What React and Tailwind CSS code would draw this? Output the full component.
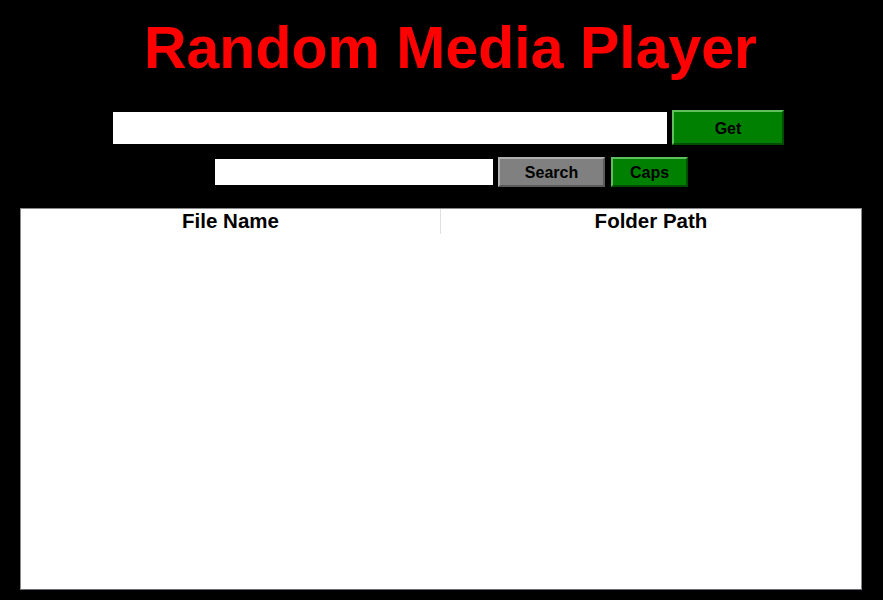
import React, { useState } from 'react';

// Random media player shell: title, fetch row, search row and results table
const App = () => {
  const [source, setSource] = useState('');
  const [query, setQuery] = useState('');

  return (
    <div className="min-h-[600px] w-full bg-black font-['Liberation_Sans',Arial,sans-serif]">
      {/* Title */}
      <div className="pt-[19px] pl-[18px] text-center">
        <h1 className="text-[59px] leading-[59px] font-bold text-[#ff0000]">Random Media Player</h1>
      </div>

      {/* Source row */}
      <div className="mt-[32px] flex items-center justify-center pl-[14px]">
        <input
          type="text"
          value={source}
          onChange={(e) => setSource(e.target.value)}
          className="h-[32px] w-[554px] bg-white px-1 text-black outline-none"
        />
        <button className="ml-[5px] h-[35px] w-[112px] border-2 border-t-[#5fbf5f] border-l-[#5fbf5f] border-b-[#004d00] border-r-[#004d00] bg-[#008000] pt-[2px] text-[16px] font-bold text-black">
          Get
        </button>
      </div>

      {/* Search row */}
      <div className="mt-[12px] flex items-center justify-center pl-[20px]">
        <input
          type="text"
          value={query}
          onChange={(e) => setQuery(e.target.value)}
          className="h-[26px] w-[278px] bg-white px-1 text-black outline-none"
        />
        <button className="ml-[5px] h-[30px] w-[107px] border-2 border-t-[#b0b0b0] border-l-[#b0b0b0] border-b-[#5a5a5a] border-r-[#5a5a5a] bg-[#808080] pt-[2px] text-[16px] font-bold text-black">
          Search
        </button>
        <button className="ml-[6px] h-[30px] w-[77px] border-2 border-t-[#5fbf5f] border-l-[#5fbf5f] border-b-[#004d00] border-r-[#004d00] bg-[#008000] pt-[2px] text-[16px] font-bold text-black">
          Caps
        </button>
      </div>

      {/* Results table */}
      <div className="mx-[20px] mr-[21px] mt-[21px] h-[382px] border border-[#8a8a8a] border-b-[#6e6a78] bg-white">
        <div className="grid grid-cols-2">
          <div className="h-[25px] border-r border-[#e0e0e0] text-center text-[20.5px] leading-[24px] font-bold text-black">
            File Name
          </div>
          <div className="h-[25px] text-center text-[20.5px] leading-[24px] font-bold text-black">
            Folder Path
          </div>
        </div>
      </div>
    </div>
  );
};

export default App;
